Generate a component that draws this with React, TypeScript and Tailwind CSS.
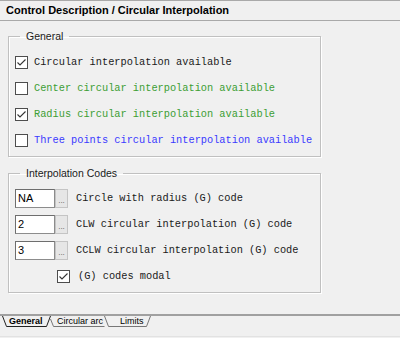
import React from "react";

const mono = { fontFamily: '"Liberation Mono", "Courier New", monospace' };

function CheckBox({ checked }: { checked?: boolean }) {
  return (
    <div className="w-[13px] h-[13px] shrink-0 border border-[#4d4d4d] bg-white flex items-center justify-center">
      {checked && (
        <svg width="11" height="11" viewBox="0 0 11 11">
          <polyline points="1.5,5.5 4,8 9.5,2.5" fill="none" stroke="#333" strokeWidth="1.1" />
        </svg>
      )}
    </div>
  );
}

function CheckRow({ label, color, checked }: { label: string; color: string; checked?: boolean }) {
  return (
    <div className="h-[26px] flex items-center gap-[6px]">
      <CheckBox checked={checked} />
      <span className={`text-[10.3px] leading-none whitespace-nowrap ${color}`} style={mono}>
        {label}
      </span>
    </div>
  );
}

function CodeRow({ value, label }: { value: string; label: string }) {
  return (
    <div className="h-[26px] flex items-center">
      <div className="w-[40px] h-[19px] bg-white border border-[#8c8c8c] border-t-[#6e6e6e] border-l-[#6e6e6e] flex items-center pl-[2px] text-[11px] text-black">
        {value}
      </div>
      <div className="w-[13px] h-[19px] bg-[#e6e6e6] border border-[#c4c4c4] flex items-end justify-center pb-[2px] text-[8px] leading-none text-[#555]">
        ...
      </div>
      <span className="ml-[8px] text-[10.3px] leading-none text-[#1a1a1a] whitespace-nowrap" style={mono}>
        {label}
      </span>
    </div>
  );
}

export default function App() {
  return (
    <div
      className="w-[400px] h-[338px] bg-[#f0f0f0] flex flex-col overflow-hidden select-none"
      style={{ fontFamily: '"Liberation Sans", Arial, sans-serif' }}
    >
      {/* title */}
      <div className="h-[21px] shrink-0 border-y border-[#a9a9a9] flex items-center pl-[6px] text-[11px] font-bold text-black">
        Control Description / Circular Interpolation
      </div>

      <fieldset className="ml-[8px] mt-[9px] w-[313px] border border-[#c0c0c0] shadow-[inset_1px_1px_0_#fff,1px_1px_0_#fff] pl-[6px] pt-[7px] pb-[3px]">
        <legend className="ml-[5px] px-[6px] text-[10.5px] leading-[12px] text-[#1a1a1a]">General</legend>
        <CheckRow label="Circular interpolation available" color="text-[#1a1a1a]" checked />
        <CheckRow label="Center circular interpolation available" color="text-[#3c9e34]" />
        <CheckRow label="Radius circular interpolation available" color="text-[#3c9e34]" checked />
        <CheckRow label="Three points circular interpolation available" color="text-[#3a3aff]" />
      </fieldset>

      <fieldset className="ml-[8px] mt-[10px] w-[313px] border border-[#c0c0c0] shadow-[inset_1px_1px_0_#fff,1px_1px_0_#fff] pl-[6px] pt-[6px] pb-[3px]">
        <legend className="ml-[5px] px-[6px] text-[10.5px] leading-[12px] text-[#1a1a1a]">Interpolation Codes</legend>
        <CodeRow value="NA" label="Circle with radius (G) code" />
        <CodeRow value="2" label="CLW circular interpolation (G) code" />
        <CodeRow value="3" label="CCLW circular interpolation (G) code" />
        <div className="h-[26px] flex items-center pl-[42px] gap-[8px]">
          <CheckBox checked />
          <span className="text-[10.3px] leading-none text-[#1a1a1a]" style={mono}>
            (G) codes modal
          </span>
        </div>
      </fieldset>

      {/* sheet tabs */}
      <div className="mt-auto h-[23px] shrink-0 border-t-2 border-[#a0a0a0] border-b border-b-[#e2e2e2] mb-[1px]">
        <div className="grid">
          <svg className="[grid-area:1/1]" width="160" height="12" viewBox="0 0 160 12">
            <path d="M50.5,3 L53.5,10.5 L104.5,10.5" fill="none" stroke="#777" strokeWidth="1" />
            <path d="M104.5,0 L108.5,10.5 L146.5,10.5 L150.5,0" fill="none" stroke="#777" strokeWidth="1" />
            <path d="M2.5,0 L6.5,10.5 L46.5,10.5 L50.5,0" fill="none" stroke="#222" strokeWidth="1" />
          </svg>
          <div className="[grid-area:1/1] flex items-center h-[11px] text-[9px] leading-none text-black">
            <span className="ml-[9px] w-[40px] font-bold">General</span>
            <span className="ml-[8px] w-[54px]">Circular arc</span>
            <span className="ml-[9px]">Limits</span>
          </div>
        </div>
      </div>
    </div>
  );
}
